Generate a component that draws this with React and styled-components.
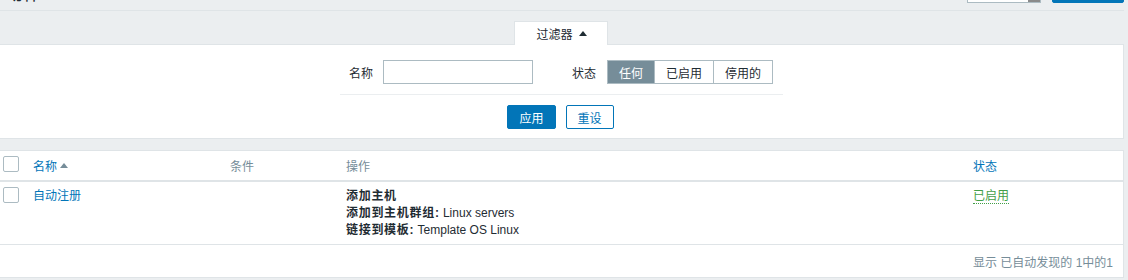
import React from 'react';
import styled, { createGlobalStyle } from 'styled-components';

const GlobalStyle = createGlobalStyle`
  * { box-sizing: border-box; }
  html, body { margin: 0; padding: 0; background: #ebeef0; }
  body {
    font-family: "Liberation Sans", Arial, "Noto Sans CJK SC", sans-serif;
    font-size: 12px;
    color: #1f2c33;
  }
`;

const Page = styled.div`
  width: 1124px;
`;

/* ---------- page title bar (mostly scrolled off) ---------- */
const TitleBar = styled.header`
  display: flex;
  align-items: flex-end;
  justify-content: space-between;
  height: 41px;
  margin-top: -30px;
  padding: 0 0 7px 5px;
  border-bottom: 1px solid #dfe4e7;
`;

const Title = styled.h1`
  margin: 0;
  font-size: 18px;
  line-height: 18px;
  font-weight: normal;
  color: #1f2c33;
`;

const TitleControls = styled.div`
  display: flex;
  align-items: center;
  gap: 11px;
`;

const ControlLabel = styled.span`
  margin-right: -1px;
`;

const Select = styled.div`
  display: flex;
  width: 74px;
  height: 24px;
  border: 1px solid #acbbc2;
  background: #fff;
`;

const SelectValue = styled.span`
  flex: 1;
  padding: 0 5px;
  line-height: 22px;
  overflow: hidden;
  white-space: nowrap;
`;

const SelectArrow = styled.span`
  width: 12px;
  background: #8a8a8a;
`;

const PrimaryButton = styled.button`
  height: 24px;
  padding: 0 11px;
  border: 1px solid #0275b8;
  border-radius: 2px;
  background: #0275b8;
  color: #fff;
  font: inherit;
  ${p => p.$wide && 'width: 72px;'}
`;

const SecondaryButton = styled(PrimaryButton)`
  background: #fff;
  color: #0275b8;
`;

/* ---------- filter ---------- */
const TabStrip = styled.div`
  display: flex;
  justify-content: center;
  padding-top: 10px;
`;

const FilterTab = styled.div`
  position: relative;
  z-index: 1;
  margin-bottom: -1px;
  margin-left: -2px;
  display: flex;
  align-items: center;
  gap: 6px;
  height: 24px;
  padding: 0 20px 0 21px;
  background: #fff;
  border: 1px solid #dfe4e7;
  border-bottom: none;
`;

const Caret = styled.span`
  display: inline-block;
  width: 0;
  height: 0;
  border-left: ${p => p.$size}px solid transparent;
  border-right: ${p => p.$size}px solid transparent;
  border-bottom: ${p => p.$size + 1}px solid ${p => p.$color};
`;

const FilterPanel = styled.section`
  background: #fff;
  border-top: 1px solid #dfe4e7;
  border-bottom: 1px solid #dfe4e7;
  border-right: 1px solid #dfe4e7;
  padding: 15px 0 9px;
`;

const FilterForm = styled.div`
  width: 443px;
  margin: 0 auto;
`;

const FilterFields = styled.div`
  display: flex;
  align-items: center;
  gap: 39px;
  padding: 0 9px 10px 9px;
  border-bottom: 1px solid #ebeef0;
`;

const FieldGroup = styled.div`
  display: flex;
  align-items: center;
  gap: ${p => p.$gap}px;
`;

const FieldLabel = styled.label`
  white-space: nowrap;
`;

const TextInput = styled.input`
  width: 150px;
  height: 24px;
  border: 1px solid #acbbc2;
  border-radius: 0;
  background: #fff;
  padding: 0 5px;
  font: inherit;
  outline: none;
`;

const Segmented = styled.div`
  display: flex;
`;

const Segment = styled.span`
  display: flex;
  align-items: center;
  height: 24px;
  padding: 0 11px;
  border: 1px solid #acbbc2;
  margin-left: -1px;
  &:first-child { margin-left: 0; }
  background: ${p => (p.$active ? '#768d99' : '#fff')};
  color: ${p => (p.$active ? '#fff' : '#1f2c33')};
  white-space: nowrap;
`;

const FilterActions = styled.div`
  display: flex;
  justify-content: center;
  gap: 10px;
  padding-top: 10px;
  margin-left: -2px;
`;

/* ---------- table ---------- */
const Table = styled.div`
  margin-top: 11px;
  background: #fff;
  border-top: 1px solid #dfe4e7;
  border-bottom: 1px solid #dfe4e7;
  border-right: 1px solid #dfe4e7;
`;

const Row = styled.div`
  display: grid;
  grid-template-columns: 28px 197px 116px 627px 1fr;
`;

const HeadRow = styled(Row)`
  height: 31px;
  border-bottom: 2px solid #dfe4e7;
`;

const BodyRow = styled(Row)`
  border-bottom: 1px solid #dfe4e7;
`;

const HeadCell = styled.div`
  display: flex;
  align-items: center;
  gap: 3px;
  padding: 0 5px 1px;
  color: ${p => (p.$link ? '#0275b8' : '#768d99')};
  white-space: nowrap;
`;

const CheckCell = styled.div`
  padding: 5px 0 0 3px;
`;

const Checkbox = styled.span`
  display: block;
  width: 16px;
  height: 16px;
  border: 1px solid #acbbc2;
  border-radius: 2px;
  background: #fff;
`;

const Cell = styled.div`
  padding: 6px 5px 5px;
  line-height: 17px;
`;

const Link = styled.a`
  color: #0275b8;
  text-decoration: none;
`;

const OpLine = styled.div`
  white-space: nowrap;
  b {
    font-weight: bold;
    letter-spacing: 0.7px;
  }
`;

const StatusLink = styled.span`
  color: #429e47;
  border-bottom: 1px dotted #429e47;
`;

const Footer = styled.div`
  display: flex;
  align-items: center;
  justify-content: flex-end;
  height: 32px;
  padding-right: 10px;
  color: #768d99;
`;

export default function App() {
  return (
    <>
      <GlobalStyle />
      <Page>
        <TitleBar>
          <Title>动作</Title>
          <TitleControls>
            <ControlLabel>事件源</ControlLabel>
            <Select>
              <SelectValue>自动注册</SelectValue>
              <SelectArrow />
            </Select>
            <PrimaryButton $wide>创建动作</PrimaryButton>
          </TitleControls>
        </TitleBar>

        <TabStrip>
          <FilterTab>
            过滤器
            <Caret $size={4} $color="#1f2c33" />
          </FilterTab>
        </TabStrip>

        <FilterPanel>
          <FilterForm>
            <FilterFields>
              <FieldGroup $gap={10}>
                <FieldLabel>名称</FieldLabel>
                <TextInput type="text" />
              </FieldGroup>
              <FieldGroup $gap={11}>
                <FieldLabel>状态</FieldLabel>
                <Segmented>
                  <Segment $active>任何</Segment>
                  <Segment>已启用</Segment>
                  <Segment>停用的</Segment>
                </Segmented>
              </FieldGroup>
            </FilterFields>
            <FilterActions>
              <PrimaryButton>应用</PrimaryButton>
              <SecondaryButton>重设</SecondaryButton>
            </FilterActions>
          </FilterForm>
        </FilterPanel>

        <Table>
          <HeadRow>
            <CheckCell>
              <Checkbox />
            </CheckCell>
            <HeadCell $link>
              名称
              <Caret $size={4} $color="#768d99" />
            </HeadCell>
            <HeadCell>条件</HeadCell>
            <HeadCell>操作</HeadCell>
            <HeadCell $link>状态</HeadCell>
          </HeadRow>
          <BodyRow>
            <CheckCell>
              <Checkbox />
            </CheckCell>
            <Cell>
              <Link>自动注册</Link>
            </Cell>
            <Cell />
            <Cell>
              <OpLine><b>添加主机</b></OpLine>
              <OpLine><b>添加到主机群组:</b> Linux servers</OpLine>
              <OpLine><b>链接到模板:</b> Template OS Linux</OpLine>
            </Cell>
            <Cell>
              <StatusLink>已启用</StatusLink>
            </Cell>
          </BodyRow>
          <Footer>显示 已自动发现的 1中的1</Footer>
        </Table>
      </Page>
    </>
  );
}
